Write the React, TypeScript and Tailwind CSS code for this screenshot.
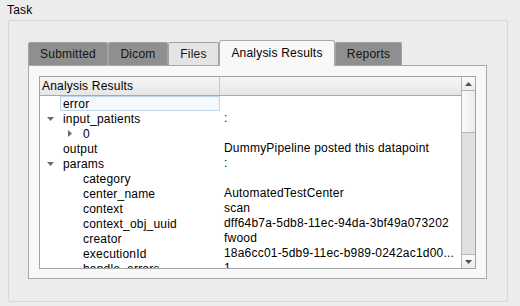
import React from 'react';

type Row = { key: string; value?: string; level: number; arrow?: 'down' | 'right'; selected?: boolean };

const rows: Row[] = [
  { key: 'error', level: 0, selected: true },
  { key: 'input_patients', value: ':', level: 0, arrow: 'down' },
  { key: '0', level: 1, arrow: 'right' },
  { key: 'output', value: 'DummyPipeline posted this datapoint', level: 0 },
  { key: 'params', value: ':', level: 0, arrow: 'down' },
  { key: 'category', level: 1 },
  { key: 'center_name', value: 'AutomatedTestCenter', level: 1 },
  { key: 'context', value: 'scan', level: 1 },
  { key: 'context_obj_uuid', value: 'dff64b7a-5db8-11ec-94da-3bf49a073202', level: 1 },
  { key: 'creator', value: 'fwood', level: 1 },
  { key: 'executionId', value: '18a6cc01-5db9-11ec-b989-0242ac1d00...', level: 1 },
  { key: 'handle_errors', value: '1', level: 1 },
];

function Arrow({ dir }: { dir: 'down' | 'right' }) {
  if (dir === 'down') {
    return (
      <svg width="7" height="4" viewBox="0 0 7 4">
        <path d="M0 0H7L3.5 4Z" fill="#6b6b6b" />
      </svg>
    );
  }
  return (
    <svg width="4" height="7" viewBox="0 0 4 7">
      <path d="M0 0V7L4 3.5Z" fill="#6b6b6b" />
    </svg>
  );
}

const tabs = [
  { label: 'Submitted', w: 'w-[80px]', bg: 'bg-[#8f8f8f]' },
  { label: 'Dicom', w: 'w-[60px]', bg: 'bg-[#8f8f8f]' },
  { label: 'Files', w: 'w-[51px]', bg: 'bg-[#e4e4e4]' },
  { label: 'Analysis Results', w: 'w-[116px]', active: true },
  { label: 'Reports', w: 'w-[67px]', bg: 'bg-[#8f8f8f]' },
];

export default function App() {
  return (
    <div className="w-[520px] h-[306px] bg-[#ececec] font-['Liberation_Sans',Arial,sans-serif] text-[12px] tracking-[0.2px] text-black overflow-hidden">
      <div className="h-[20px] pl-[7px] pt-[3px] leading-[14px]">Task</div>

      {/* Group box */}
      <div className="ml-[8px] w-[500px] h-[282px] border border-[#d6d6d6] rounded-[2px] pl-[19px] pt-[19px]">
        {/* Tab bar */}
        <div className="flex items-end h-[25px]">
          {tabs.map((t) =>
            t.active ? (
              <div
                key={t.label}
                className={`${t.w} h-[26px] -mb-px relative z-10 bg-[#f8f8f8] border border-b-0 border-[#a8a8a8] rounded-t-[3px] flex items-center justify-center pb-[1px]`}
              >
                {t.label}
              </div>
            ) : (
              <div
                key={t.label}
                className={`${t.w} h-[23px] ${t.bg} border border-b-0 border-[#a3a3a3] rounded-t-[2px] flex items-center justify-center text-[#141414]`}
              >
                {t.label}
              </div>
            )
          )}
        </div>

        {/* Tab pane */}
        <div className="w-[459px] h-[214px] border border-[#a8a8a8] bg-[#f8f8f8] pl-[10px] pt-[10px]">
          <div className="w-[437px] h-[193px] border border-[#a3a3a3] bg-white flex">
            <div className="flex-1 overflow-hidden">
              {/* Header */}
              <div className="h-[19px] flex border-b border-[#a8a8a8] bg-gradient-to-b from-[#f6f6f6] to-[#e6e6e6]">
                <div className="w-[180px] border-r border-[#c6c6c6] pl-[2px] flex items-center">Analysis Results</div>
                <div className="flex-1" />
              </div>

              {/* Rows */}
              {rows.map((r) => (
                <div key={r.key} className="h-[15px] flex items-center">
                  <div className="w-[180px] h-full flex items-center">
                    {r.level === 1 && <div className="w-[20px] shrink-0" />}
                    <div className="w-[20px] shrink-0 flex justify-center items-center">
                      {r.arrow && <Arrow dir={r.arrow} />}
                    </div>
                    <div
                      className={`flex-1 h-full flex items-center pl-[2px] ${
                        r.selected ? 'border border-[#c2d4e8] bg-[#f6f9fc]' : 'pl-[3px]'
                      }`}
                    >
                      {r.key}
                    </div>
                  </div>
                  <div className="flex-1 min-w-0 pl-[4px] whitespace-nowrap overflow-hidden leading-[15px]">{r.value}</div>
                </div>
              ))}
            </div>

            {/* Scrollbar */}
            <div className="w-[14px] shrink-0 border-l border-[#b4b4b4] bg-[#e0e0e0] flex flex-col">
              <div className="h-[14px] border-b border-[#b4b4b4] bg-gradient-to-b from-[#fbfbfb] to-[#ececec] flex items-center justify-center">
                <svg width="7" height="4" viewBox="0 0 7 4">
                  <path d="M3.5 0L7 4H0Z" fill="#505050" />
                </svg>
              </div>
              <div className="h-[42px] border-b border-[#b4b4b4] bg-gradient-to-r from-[#fafafa] to-[#ebebeb]" />
              <div className="flex-1" />
              <div className="h-[14px] border-t border-[#b4b4b4] bg-gradient-to-b from-[#fbfbfb] to-[#ececec] flex items-center justify-center">
                <svg width="7" height="4" viewBox="0 0 7 4">
                  <path d="M0 0H7L3.5 4Z" fill="#505050" />
                </svg>
              </div>
            </div>
          </div>
        </div>
      </div>
    </div>
  );
}
